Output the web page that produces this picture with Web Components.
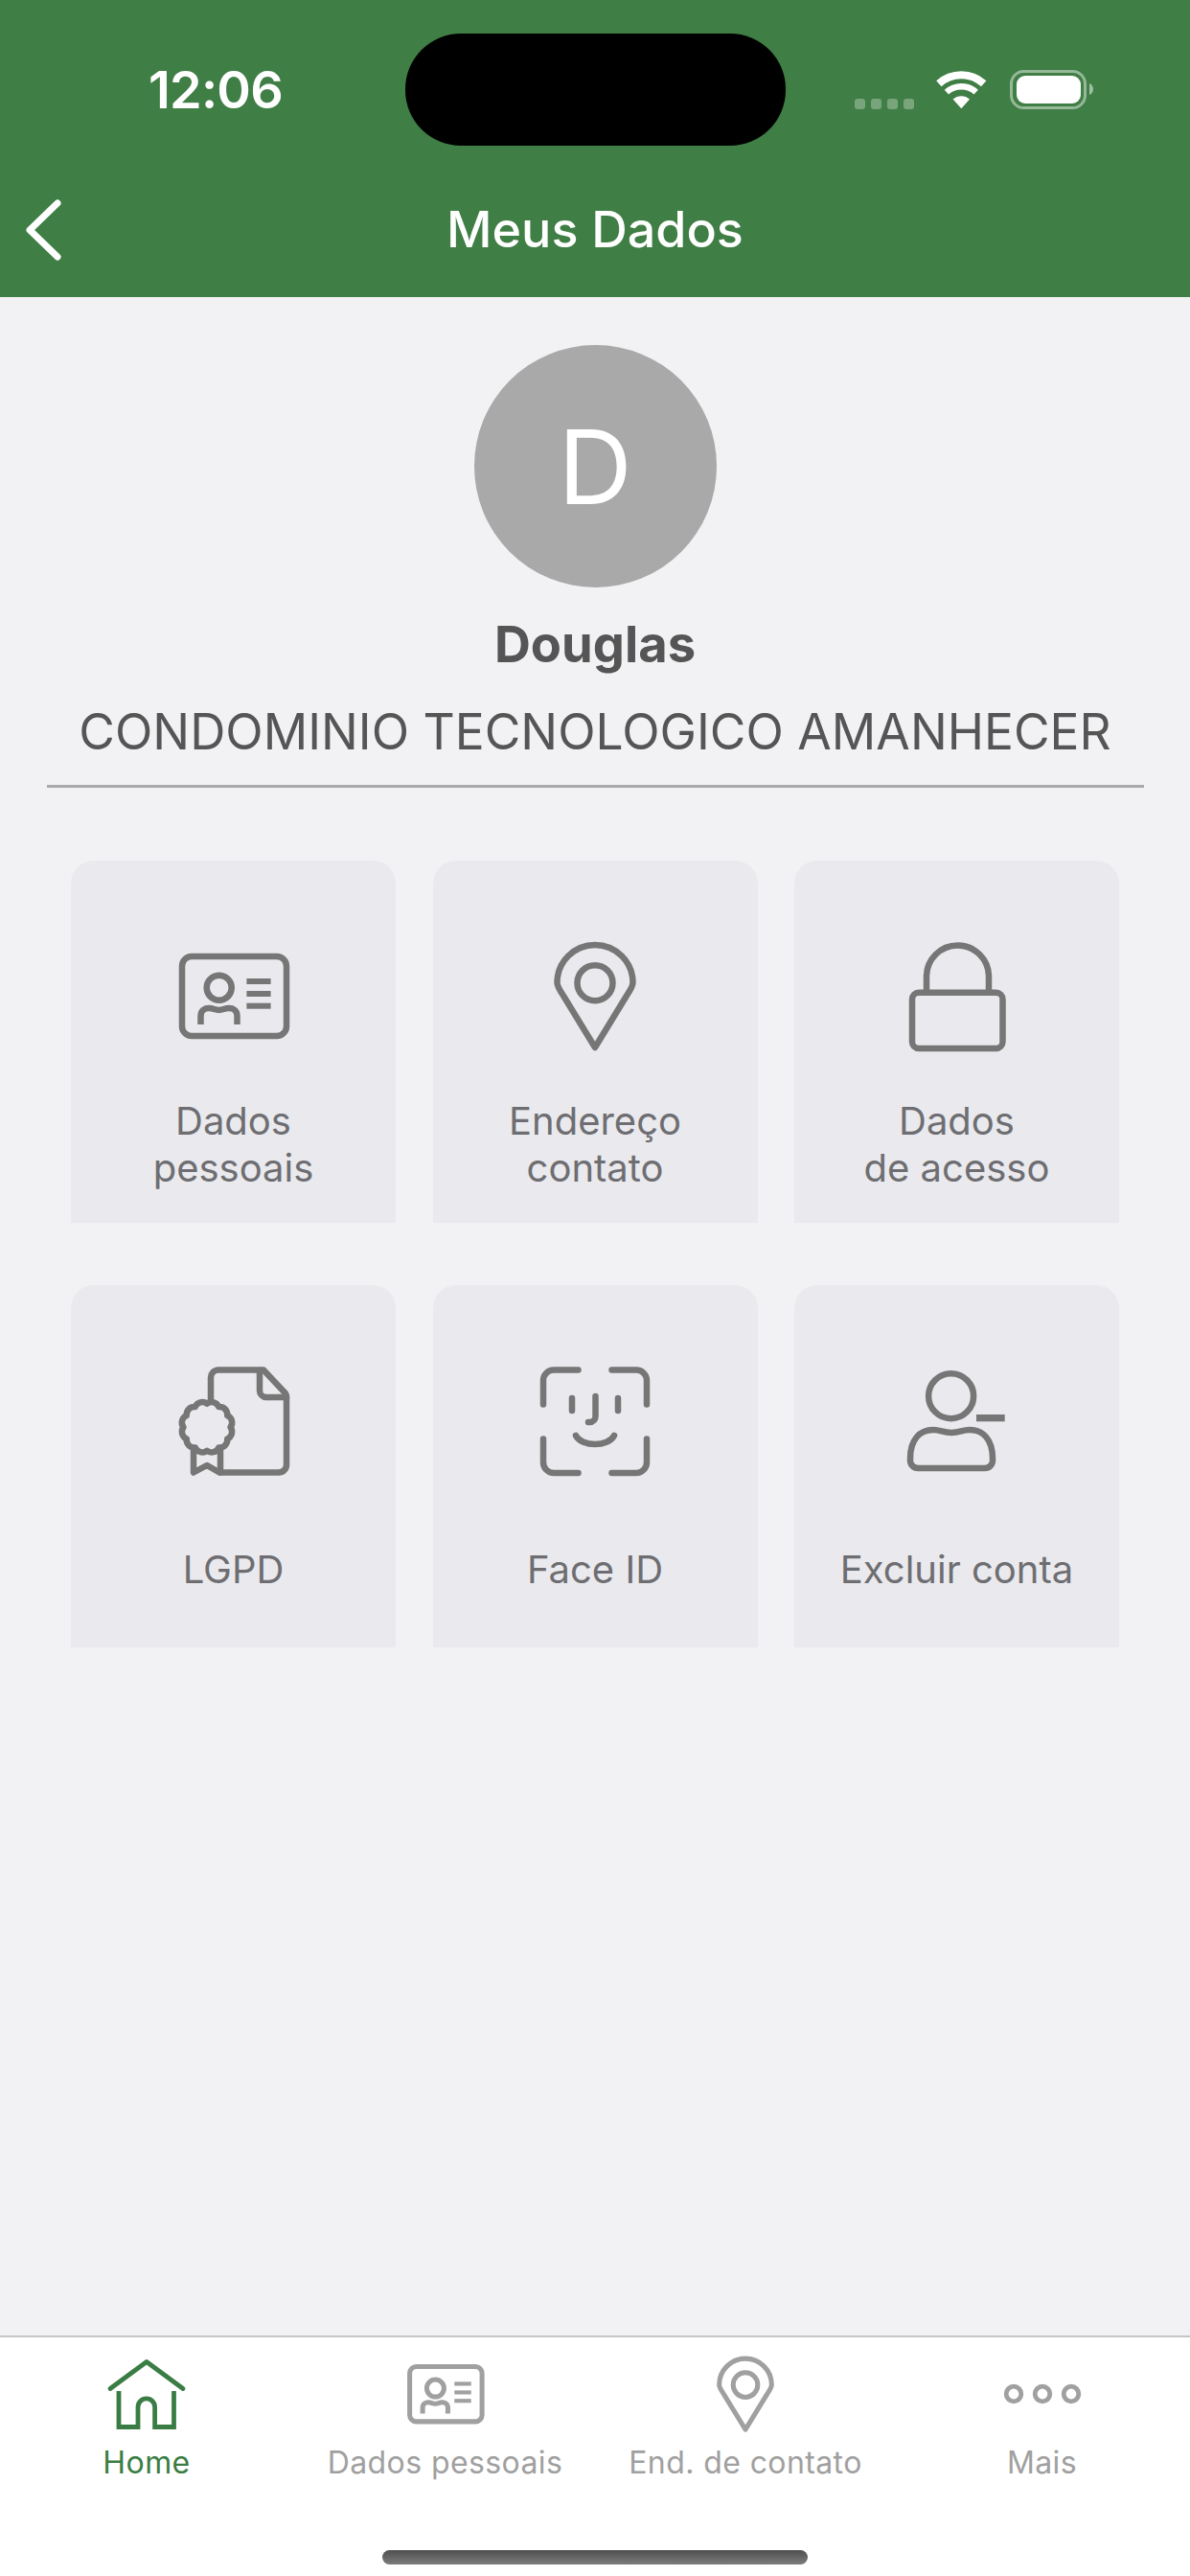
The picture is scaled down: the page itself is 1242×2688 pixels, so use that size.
<!DOCTYPE html>
<html lang="pt-BR">
<head>
<meta charset="utf-8">
<title>Meus Dados</title>
<style>
  html, body { margin: 0; padding: 0; background: #f2f2f5; }
</style>
</head>
<body>
<app-screen>
  <app-header title="Meus Dados" time="12:06"></app-header>
  <profile-head initial="D" name="Douglas" place="CONDOMINIO TECNOLOGICO AMANHECER"></profile-head>
  <menu-grid>
    <menu-card icon="id">Dados<br>pessoais</menu-card>
    <menu-card icon="pin">Endereço<br>contato</menu-card>
    <menu-card icon="lock">Dados<br>de acesso</menu-card>
    <menu-card icon="cert">LGPD</menu-card>
    <menu-card icon="face">Face ID</menu-card>
    <menu-card icon="person">Excluir conta</menu-card>
  </menu-grid>
  <tab-bar>
    <tab-item icon="home" active>Home</tab-item>
    <tab-item icon="id">Dados pessoais</tab-item>
    <tab-item icon="pin">End. de contato</tab-item>
    <tab-item icon="dots">Mais</tab-item>
  </tab-bar>
</app-screen>

<script>
// scalloped seal for the certificate icon
function scallop(cx, cy, r, n) {
  let d = '';
  for (let i = 0; i <= n; i++) {
    const a = (i / n) * Math.PI * 2;
    const x = (cx + r * Math.cos(a)).toFixed(1);
    const y = (cy + r * Math.sin(a)).toFixed(1);
    d += i === 0 ? `M${x} ${y}` : `A8 8 0 0 1 ${x} ${y}`;
  }
  return d + 'Z';
}

const ICONS = {
  id: `<svg viewBox="0 0 130 114">
    <rect x="11" y="15" width="109" height="83" rx="10"/>
    <circle cx="49.7" cy="47.7" r="13"/>
    <path d="M30.5 86V77C30.5 71 35 69 39 69C44 69 45 71 49.5 71C54 71 55 69 60 69C64 69 68.5 71 68.5 77V86" stroke-linecap="butt"/>
    <g class="solid">
      <rect x="78.4" y="38" width="25.2" height="6"/>
      <rect x="78.4" y="51" width="25.2" height="6"/>
      <rect x="78.4" y="63.7" width="25.2" height="6"/>
    </g>
  </svg>`,
  pin: `<svg viewBox="0 0 130 114">
    <path d="M65 110L32 56C28 50 25.5 46 25.5 42.5A39.5 39.5 0 0 1 104.5 42.5C104.5 46 102 50 98 56Z"/>
    <circle cx="65" cy="42.7" r="18.5"/>
  </svg>`,
  lock: `<svg viewBox="0 0 130 114">
    <rect x="18" y="52.7" width="94.5" height="58.3" rx="7"/>
    <path d="M33 52V36A32.5 32.5 0 0 1 98 36V52"/>
  </svg>`,
  cert: `<svg viewBox="0 0 130 114">
    <path d="M41 36V12a8 8 0 0 1 8-8.500H96L119 28Q120 29.500 120 32V102.500a8 8 0 0 1-8 8H50L37 103L23 110.500V86"/>
    <path d="M92 4V25a7 7 0 0 0 7 7H120"/>
    <path d="M51 86V110.500"/>
    <path d="${scallop(37, 63.3, 24.500, 12)}"/>
  </svg>`,
  face: `<svg viewBox="0 0 130 114">
    <path d="M47.500 3.500H22a11 11 0 0 0-11 11V39.500"/>
    <path d="M82.500 3.500H108a11 11 0 0 1 11 11V39.500"/>
    <path d="M11 75.500V100a11 11 0 0 0 11 11H47.500"/>
    <path d="M119 75.500V100a11 11 0 0 1-11 11H82.500"/>
    <path d="M41 33V46"/>
    <path d="M89 33V46"/>
    <path d="M65.500 31V52a6 6 0 0 1-6 6H58"/>
    <path d="M45 72C51 84 79 84 85 72"/>
  </svg>`,
  person: `<svg viewBox="0 0 130 114">
    <circle cx="58.600" cy="30.700" r="23.500"/>
    <path d="M16 96C16 76 26 66 40 66C48 66 50 69 59 69C68 69 70 66 78 66C92 66 102 76 102 96V98a8 8 0 0 1-8 8H24a8 8 0 0 1-8-8Z"/>
    <rect class="solid" x="85" y="50" width="29.700" height="7.300"/>
  </svg>`,
  home: `<svg viewBox="0 0 90 79">
    <path d="M7 33.500L45 5.500L83 33.500"/>
    <path d="M16 36V73.500H36V52.700a8.800 8.800 0 0 1 17.600 0V73.500H73.500V36" stroke-linejoin="miter" stroke-linecap="butt"/>
  </svg>`,
  dots: `<svg viewBox="0 0 90 79">
    <circle cx="15" cy="39" r="7.800"/>
    <circle cx="45" cy="39" r="7.800"/>
    <circle cx="75" cy="39" r="7.800"/>
  </svg>`
};

class AppIcon extends HTMLElement {
  constructor() {
    super();
    this.attachShadow({ mode: 'open' });
  }

  connectedCallback() {
    this.shadowRoot.innerHTML = `
      <style>
        :host { display: block; width: 130px; height: 114px; }
        svg {
          display: block;
          width: 100%;
          height: 100%;
          overflow: visible;
          fill: none;
          stroke: currentColor;
          stroke-width: var(--icon-stroke, 6.500);
          stroke-linecap: round;
          stroke-linejoin: round;
        }
        .solid, .solid rect { fill: currentColor; stroke: none; }
      </style>
      ${ICONS[this.getAttribute('name')]}
    `;
  }
}

class AppScreen extends HTMLElement {
  constructor() {
    super();
    this.attachShadow({ mode: 'open' });
    this.shadowRoot.innerHTML = `
      <style>
        :host {
          display: flex;
          flex-direction: column;
          width: 1242px;
          height: 2688px;
          overflow: hidden;
          background: #f2f2f5;
          font-family: Inter, "Liberation Sans", sans-serif;
        }
      </style>
      <slot></slot>
    `;
  }
}

class AppHeader extends HTMLElement {
  constructor() {
    super();
    this.attachShadow({ mode: 'open' });
  }

  connectedCallback() {
    this.shadowRoot.innerHTML = `
      <style>
        :host {
          display: block;
          height: 310px;
          box-sizing: border-box;
          padding-top: 35px;
          background: #3f7e45;
          color: #fff;
        }
        .status {
          display: flex;
          align-items: center;
          height: 117px;
        }
        .time {
          box-sizing: border-box;
          width: 423px;
          padding-left: 27px;
          text-align: center;
          font-size: 54px;
          font-weight: 600;
          letter-spacing: -0.800px;
        }
        .island {
          width: 397px;
          height: 117px;
          border-radius: 58px;
          background: #000;
        }
        .sys {
          display: block;
          margin-left: 72px;
          width: 250px;
          height: 46px;
        }
        .nav {
          display: grid;
          grid-template-columns: 1fr auto 1fr;
          align-items: center;
          height: 80px;
          margin-top: 48px;
        }
        .back { display: block; margin-left: 26px; width: 40px; height: 64px; }
        h1 {
          margin: 0;
          font-size: 52px;
          line-height: 60px;
          font-weight: 500;
        }
      </style>
      <div class="status">
        <div class="time">${this.getAttribute('time')}</div>
        <div class="island"></div>
        <svg class="sys" viewBox="0 0 250 46" fill="#fff">
          <g opacity=".3">
            <rect x="0" y="32" width="11" height="11" rx="3"/>
            <rect x="17" y="32" width="11" height="11" rx="3"/>
            <rect x="34" y="32" width="11" height="11" rx="3"/>
            <rect x="51" y="32" width="11" height="11" rx="3"/>
          </g>
          <path d="M87.900 16.300A35 35 0 0 1 134.700 16.300" fill="none" stroke="#fff" stroke-width="8"/>
          <path d="M95.900 25.200A23 23 0 0 1 126.700 25.200" fill="none" stroke="#fff" stroke-width="6.500"/>
          <path d="M111.300 42.300L102.600 32.600A13 13 0 0 1 120 32.600Z"/>
          <rect x="163.500" y="3.500" width="77" height="38" rx="13" fill="none" stroke="#fff" stroke-opacity=".45" stroke-width="3"/>
          <rect x="169" y="8" width="67" height="29" rx="9"/>
          <path d="M245 16C248 17 249 20 249 22S248 27 245 28Z" opacity=".5"/>
        </svg>
      </div>
      <div class="nav">
        <svg class="back" viewBox="0 0 40 64" fill="none" stroke="#fff" stroke-width="7" stroke-linecap="round" stroke-linejoin="round">
          <path d="M34 4L5 32L34 60"/>
        </svg>
        <h1>${this.getAttribute('title')}</h1>
      </div>
    `;
  }
}

class ProfileHead extends HTMLElement {
  constructor() {
    super();
    this.attachShadow({ mode: 'open' });
  }

  connectedCallback() {
    this.shadowRoot.innerHTML = `
      <style>
        :host {
          display: flex;
          flex-direction: column;
          align-items: center;
          padding-top: 50px;
          color: #555;
        }
        .avatar {
          display: flex;
          align-items: center;
          justify-content: center;
          width: 253px;
          height: 253px;
          border-radius: 50%;
          background: #a9a9a9;
          color: #fff;
          font-size: 107px;
          font-weight: 400;
        }
        .name {
          margin-top: 29px;
          font-size: 52.500px;
          line-height: 60px;
          font-weight: 700;
        }
        .place {
          margin-top: 31px;
          font-size: 51.500px;
          line-height: 60px;
          font-weight: 400;
          white-space: nowrap;
        }
        hr {
          align-self: stretch;
          margin: 26px 48px 0 49px;
          height: 3px;
          border: 0;
          background: #a9a9a9;
        }
      </style>
      <div class="avatar">${this.getAttribute('initial')}</div>
      <div class="name">${this.getAttribute('name')}</div>
      <div class="place">${this.getAttribute('place')}</div>
      <hr>
    `;
  }
}

class MenuGrid extends HTMLElement {
  constructor() {
    super();
    this.attachShadow({ mode: 'open' });
    this.shadowRoot.innerHTML = `
      <style>
        :host {
          display: grid;
          grid-template-columns: repeat(3, 339px);
          grid-auto-rows: 378px;
          column-gap: 38.500px;
          row-gap: 65px;
          padding: 76px 74px 0;
          flex: 1;
        }
      </style>
      <slot></slot>
    `;
  }
}

class MenuCard extends HTMLElement {
  constructor() {
    super();
    this.attachShadow({ mode: 'open' });
  }

  connectedCallback() {
    this.shadowRoot.innerHTML = `
      <style>
        :host {
          display: flex;
          flex-direction: column;
          align-items: center;
          padding-top: 85px;
          box-sizing: border-box;
          border-radius: 24px 24px 0 0;
          background: #eaeaee;
          color: #767676;
        }
        .label {
          display: flex;
          align-items: center;
          justify-content: center;
          height: 98px;
          margin-top: 48px;
          text-align: center;
          font-size: 40px;
          line-height: 49px;
          color: #6e6e72;
        }
      </style>
      <app-icon name="${this.getAttribute('icon')}"></app-icon>
      <div class="label"><div><slot></slot></div></div>
    `;
  }
}

class TabBar extends HTMLElement {
  constructor() {
    super();
    this.attachShadow({ mode: 'open' });
    this.shadowRoot.innerHTML = `
      <style>
        :host {
          display: flex;
          flex-direction: column;
          height: 251px;
          box-sizing: border-box;
          border-top: 2px solid #c6c6c8;
          background: #fff;
        }
        .tabs {
          display: grid;
          grid-template-columns: 306px 317px 310px 309px;
          padding-top: 20px;
        }
        .indicator {
          width: 444px;
          height: 15px;
          margin: auto auto 12px;
          border-radius: 8px;
          background: linear-gradient(#4f4f4f, #7c7c7c);
        }
      </style>
      <div class="tabs"><slot></slot></div>
      <div class="indicator"></div>
    `;
  }
}

class TabItem extends HTMLElement {
  constructor() {
    super();
    this.attachShadow({ mode: 'open' });
  }

  connectedCallback() {
    const isSmallSet = ['home', 'dots'].includes(this.getAttribute('icon'));
    this.shadowRoot.innerHTML = `
      <style>
        :host {
          display: flex;
          flex-direction: column;
          align-items: center;
          color: #a0a0a0;
          --icon-stroke: ${isSmallSet ? '4.800' : '7.300'};
        }
        :host([active]) { color: #3a7d44; }
        app-icon { width: 90px; height: 79px; }
        .label {
          margin-top: 14px;
          font-size: 32px;
          line-height: 36px;
          letter-spacing: 0.400px;
          white-space: nowrap;
        }
      </style>
      <app-icon name="${this.getAttribute('icon')}"></app-icon>
      <div class="label"><slot></slot></div>
    `;
  }
}

customElements.define('app-icon', AppIcon);
customElements.define('app-screen', AppScreen);
customElements.define('app-header', AppHeader);
customElements.define('profile-head', ProfileHead);
customElements.define('menu-grid', MenuGrid);
customElements.define('menu-card', MenuCard);
customElements.define('tab-bar', TabBar);
customElements.define('tab-item', TabItem);
</script>
</body>
</html>
